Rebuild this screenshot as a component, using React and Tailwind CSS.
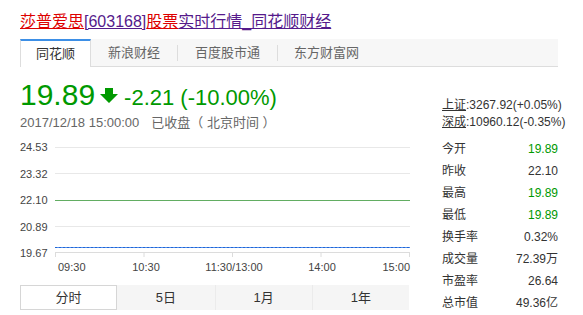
import React from 'react';

const stats = [
  { label: '今开', value: '19.89', green: true },
  { label: '昨收', value: '22.10' },
  { label: '最高', value: '19.89', green: true },
  { label: '最低', value: '19.89', green: true },
  { label: '换手率', value: '0.32%' },
  { label: '成交量', value: '72.39万' },
  { label: '市盈率', value: '26.64' },
  { label: '总市值', value: '49.36亿' },
];

const yLabels = ['24.53', '23.32', '22.10', '20.89', '19.67'];
const xLabels = ['09:30', '10:30', '11:30/13:00', '14:00', '15:00'];
const periods = ['分时', '5日', '1月', '1年'];

const Sep = () => (
  <div className="h-full w-px bg-[#f7f7f7] border-b border-[#ddd] flex items-center">
    <div className="h-[16px] w-px bg-[#ddd]" />
  </div>
);

const Chart = () => (
  <svg width="355" height="120" viewBox="0 0 355 120" className="block">
    <line x1="0" y1="7.5" x2="355" y2="7.5" stroke="#e8e8e8" />
    <line x1="0" y1="33.5" x2="355" y2="33.5" stroke="#e8e8e8" />
    <line x1="0" y1="86.5" x2="355" y2="86.5" stroke="#e8e8e8" />
    <line x1="0" y1="60.5" x2="355" y2="60.5" stroke="#62ad62" />
    <line x1="0" y1="112.5" x2="355" y2="112.5" stroke="#dcdcdc" />
    <line x1="0" y1="107.5" x2="355" y2="107.5" stroke="#4d8ff0" />
    <line x1="0" y1="107.5" x2="355" y2="107.5" stroke="#2464d0" strokeDasharray="2 2" />
    {[0.5, 89, 177.5, 266, 354.5].map(x => (
      <line key={x} x1={x} y1="112.5" x2={x} y2="117" stroke="#dcdcdc" />
    ))}
  </svg>
);

export default function App() {
  return (
    <div className="w-[583px] h-[315px] overflow-hidden bg-white pl-5 font-['Liberation_Sans','Noto_Sans_CJK_SC',sans-serif] text-[#333]">
      {/* Title */}
      <div className="pt-3 text-[16px] leading-[20px] whitespace-nowrap">
        <a href="#" className="text-[#551a8b]">
          <span className="underline text-[#dd0000]">莎普爱思</span>
          <span className="underline">[603168]</span>
          <span className="underline text-[#dd0000]">股票</span>
          <span className="underline">实时行情_同花顺财经</span>
        </a>
      </div>

      {/* Source tabs */}
      <div className="mt-[7px] flex h-[28px] w-[538px] text-[13px]">
        <div className="w-[71px] h-full bg-white border-t-2 border-t-[#3d8fe6] border-x border-x-[#ddd] flex items-center justify-center text-[#333]">
          同花顺
        </div>
        <div className="w-[86px] h-full bg-[#f7f7f7] border-b border-[#ddd] flex items-center justify-center text-[#666]">
          新浪财经
        </div>
        <Sep />
        <div className="w-[99px] h-full bg-[#f7f7f7] border-b border-[#ddd] flex items-center justify-center text-[#666]">
          百度股市通
        </div>
        <Sep />
        <div className="w-[97px] h-full bg-[#f7f7f7] border-b border-[#ddd] flex items-center justify-center text-[#666]">
          东方财富网
        </div>
        <div className="flex-1 h-full bg-[#f7f7f7] border-b border-[#ddd]" />
      </div>

      <div className="flex">
        {/* Left: price and chart */}
        <div className="w-[390px]">
          <div className="mt-[13px] flex items-baseline h-[30px] text-[#009900]">
            <span className="text-[30px] leading-[30px]">19.89</span>
            <svg width="18" height="15" viewBox="0 0 18 15" className="self-center ml-[5px]">
              <polygon points="5,0 13,0 13,6 18,6 9,15 0,6 5,6" fill="#009900" />
            </svg>
            <span className="ml-[6px] text-[22px] leading-[22px]">-2.21 (-10.00%)</span>
          </div>
          <div className="mt-[5px] text-[13px] leading-[16px] text-[#666] whitespace-nowrap">
            2017/12/18 15:00:00<span className="ml-3">已收盘（ 北京时间 ）</span>
          </div>

          <div className="mt-[9px] flex h-[120px]">
            <div className="w-[28px] mr-[7px] flex flex-col justify-between text-[11px] leading-[14px] text-[#444]">
              {yLabels.map(l => (
                <div key={l}>{l}</div>
              ))}
            </div>
            <Chart />
          </div>
          <div className="ml-[35px] w-[355px] h-[14px] flex justify-between text-[11px] leading-[14px] text-[#444]">
            {xLabels.map((l, i) => (
              <div
                key={l}
                className={`w-0 flex whitespace-nowrap ${
                  i === 0 ? 'justify-start pl-[3px]' : i === 4 ? 'justify-end' : 'justify-center'
                }`}
              >
                {l}
              </div>
            ))}
          </div>

          <div className="mt-[11px] grid grid-cols-4 w-[389px] h-[25px] text-[13px]">
            {periods.map((p, i) => (
              <div
                key={p}
                className={`flex items-center justify-center ${
                  i === 0
                    ? 'bg-white border border-[#d6d6d6]'
                    : i === 1
                      ? 'bg-[#f5f5f5]'
                      : 'bg-[#f5f5f5] border-l border-l-[#ebebeb]'
                }`}
              >
                {p}
              </div>
            ))}
          </div>
        </div>

        {/* Right: index + stats */}
        <div className="ml-[32px] w-[116px] pt-[30px]">
          <div className="text-[12px] leading-[17px] text-right whitespace-nowrap">
            <div>
              <span className="underline">上证</span>:3267.92(+0.05%)
            </div>
            <div>
              <span className="underline">深成</span>:10960.12(-0.35%)
            </div>
          </div>
          <div className="mt-[7px] text-[12px]">
            {stats.map(s => (
              <div key={s.label} className="h-[22px] flex items-center justify-between">
                <span>{s.label}</span>
                <span className={s.green ? 'text-[#009900]' : ''}>{s.value}</span>
              </div>
            ))}
          </div>
        </div>
      </div>
    </div>
  );
}
